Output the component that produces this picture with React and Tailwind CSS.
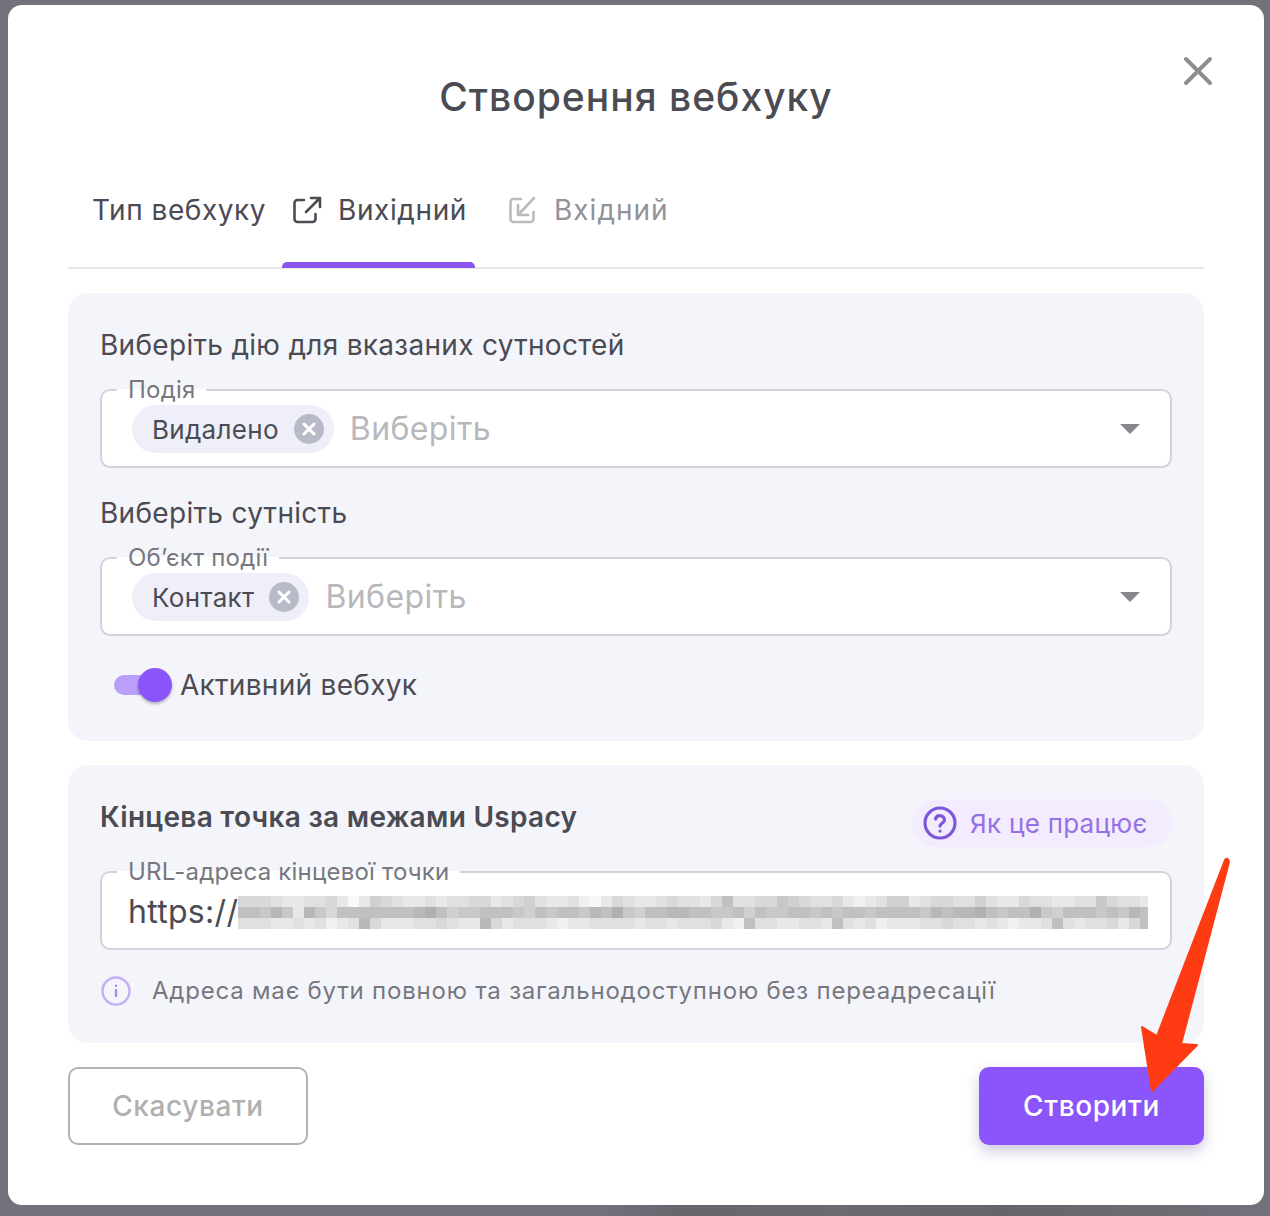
import React from 'react';

// blurred part of the url, gray level per cell (3 rows)
const blurRows = [
  'fffghhggfhjhefghhghggffhgfeghhgijhfghhgfgghfcggffdefggfhihgeehgffggeghhfgghhggdfgghfgghhgg',
  'ccdbdhbdfcccccccbaceddcccdecdccdbcadeccbbccddcecddccdcdccdccccdbcbbacdccadecccdcdbcbdcdcdc',
  'ggghhghgihgbfhhhggfghhbfhggghihhgggghgghgggfhicgghhgghcghgihhhggfgghghihhgcghggfhfcghghghg',
];
const shade = (c) => {
  const n = 176 + (c.charCodeAt(0) - 97) * 8;
  return `rgb(${n},${n},${n + 2})`;
};

const WebhookField = ({ label, children }) => (
  <fieldset className="h-[90px] min-w-0 rounded-[10px] border-2 border-[#d2d2d8] bg-white px-[30px] pb-[12px]">
    <legend className="ml-[-15px] px-[11px] text-[24px] leading-[24px] tracking-[0.2px] text-[#77777f]">{label}</legend>
    {children}
  </fieldset>
);

const Chip = ({ text }) => (
  <div className="flex h-[48px] items-center rounded-full bg-[#eeeff8] pl-[20px] pr-[10px]">
    <span className="text-[26px] tracking-[0.3px] text-[#4b4b55]">{text}</span>
    <span className="ml-[15px] flex h-[30px] w-[30px] items-center justify-center rounded-full bg-[#b9bac8]">
      <svg width="14" height="14" viewBox="0 0 14 14" fill="none" stroke="white" strokeWidth="3" strokeLinecap="round">
        <path d="M2 2l10 10M12 2L2 12" />
      </svg>
    </span>
  </div>
);

const SelectField = ({ label, chip }) => (
  <WebhookField label={label}>
    <div className="flex items-center pt-[3px]">
      <Chip text={chip} />
      <span className="ml-[16px] text-[32px] tracking-[0.4px] text-[#b8b8bc]">Виберіть</span>
      <svg className="ml-auto" width="20" height="10" viewBox="0 0 20 10" fill="#87878c">
        <path d="M0 0h20L10 10z" />
      </svg>
    </div>
  </WebhookField>
);

export default function App() {
  return (
    <div className="relative h-[1216px] w-[1270px] overflow-hidden bg-[#72727b] pl-[8px] pt-[5px] font-['Inter',sans-serif]">
      <div className="absolute bottom-0 left-[600px] right-0 h-[11px] bg-[linear-gradient(90deg,#72727b,#66666d_12%,#6a6a71_35%,#65656c_60%,#6c6c73_85%,#72727b)]" />
      <div className="relative h-[1200px] w-[1256px] rounded-[14px] bg-white px-[60px]">
        {/* Title */}
        <div className="flex h-[130px] items-end justify-center pb-[14px]">
          <h1 className="text-[39px] font-medium leading-[48px] tracking-[1px] text-[#4b4b53]">Створення вебхуку</h1>
        </div>
        <button className="absolute right-[51px] top-[51px] text-[#8e8e92]">
          <svg width="30" height="30" viewBox="0 0 30 30" fill="none" stroke="currentColor" strokeWidth="4" strokeLinecap="round">
            <path d="M3 3l24 24M27 3L3 27" />
          </svg>
        </button>

        {/* Tabs */}
        <div className="flex h-[134px] items-start border-b-2 border-[#e6e6ea] pt-[55px] text-[28px] leading-[40px] text-[#4b4b53]">
          <span className="ml-[24px] w-[190px] tracking-[0.55px]">Тип вебхуку</span>
          <div className="relative flex h-[78px] w-[193px] items-start pl-[10px] tracking-[0.6px]">
            <svg className="mt-[5px]" width="30" height="30" viewBox="0 0 30 30" fill="none" stroke="currentColor" strokeWidth="2.6" strokeLinecap="round" strokeLinejoin="round">
              <path d="M12 5H5.5A3 3 0 0 0 2.5 8v16a3 3 0 0 0 3 3h15a3 3 0 0 0 3-3v-5" />
              <path d="M14 17L28 3M19 3h9v9" />
            </svg>
            <span className="ml-[16px]">Вихідний</span>
            <div className="absolute bottom-0 left-0 right-0 h-[6px] rounded-t-[5px] bg-[#8b55f0]" />
          </div>
          <div className="ml-[33px] flex items-start tracking-[1px] opacity-60">
            <svg className="mt-[5px]" width="30" height="30" viewBox="0 0 30 30" fill="none" stroke="#8e8e92" strokeWidth="2.6" strokeLinecap="round" strokeLinejoin="round">
              <path d="M13 4H5.5a3 3 0 0 0-3 3v17a3 3 0 0 0 3 3h17a3 3 0 0 0 3-3v-7" />
              <path d="M26 3L11 19M10 10v10h10" />
            </svg>
            <span className="ml-[16px]">Вхідний</span>
          </div>
        </div>

        {/* Event panel */}
        <div className="mt-[24px] h-[448px] rounded-[20px] bg-[#f4f5fa] px-[32px] pt-[33px]">
          <p className="text-[28px] leading-[38px] tracking-[0.3px] text-[#4b4b53]">Виберіть дію для вказаних сутностей</p>
          <div className="mt-[14px]">
            <SelectField label="Подія" chip="Видалено" />
          </div>
          <p className="mt-[26px] text-[28px] leading-[38px] tracking-[0.3px] text-[#4b4b53]">Виберіть сутність</p>
          <div className="mt-[14px]">
            <SelectField label="Об’єкт події" chip="Контакт" />
          </div>
          <div className="ml-[14px] mt-[29px] flex items-center">
            <div className="relative h-[20px] w-[44px] rounded-full bg-[#b99ff8]">
              <div className="absolute right-[-14px] top-[-7px] h-[34px] w-[34px] rounded-full bg-[#8b55fb] shadow-[0_2px_3px_rgba(0,0,0,0.25)]" />
            </div>
            <span className="ml-[22px] text-[28px] leading-[40px] tracking-[0.3px] text-[#4b4b53]">Активний вебхук</span>
          </div>
        </div>

        {/* Endpoint panel */}
        <div className="mt-[24px] h-[278px] rounded-[20px] bg-[#f4f5fa] px-[32px] pt-[34px]">
          <div className="flex h-[48px] items-start justify-between">
            <p className="text-[28px] font-semibold leading-[36px] tracking-[0.3px] text-[#4b4b53]">Кінцева точка за межами Uspacy</p>
            <div className="flex h-[48px] w-[260px] items-center rounded-full bg-[#f3ecfe] pl-[11px]">
              <svg width="34" height="34" viewBox="0 0 34 34" fill="none" stroke="#7e57d9" strokeWidth="3.2" strokeLinecap="round" strokeLinejoin="round">
                <circle cx="17" cy="17" r="15" />
                <path d="M12.5 13a4.6 4.6 0 0 1 9 1c0 3-4.5 3.5-4.5 6" />
                <path d="M17 25v.1" />
              </svg>
              <span className="ml-[13px] text-[26px] tracking-[0.25px] text-[#9670e5]">Як це працює</span>
            </div>
          </div>
          <div className="mt-[13px]">
            <WebhookField label="URL-адреса кінцевої точки">
              <div className="ml-[-4px] flex h-[48px] items-center pt-[8px]">
                <span className="text-[32px] tracking-[0.3px] text-[#4b4b53]">https://</span>
                <div className="flex w-[910px] shrink-0 flex-col overflow-hidden">
                  {blurRows.map((row, i) => (
                    <div key={i} className="flex">
                      {row.split('').map((c, j) => (
                        <div key={j} className="h-[11px] w-[11px] shrink-0" style={{ backgroundColor: shade(c) }} />
                      ))}
                    </div>
                  ))}
                </div>
              </div>
            </WebhookField>
          </div>
          <div className="ml-[1px] mt-[25px] flex items-center">
            <svg width="30" height="30" viewBox="0 0 30 30" fill="none" stroke="#c4aef5" strokeWidth="2.4" strokeLinecap="round">
              <circle cx="15" cy="15" r="13.5" />
              <path d="M15 14v6M15 9.6v.1" stroke="#a78bea" />
            </svg>
            <span className="ml-[21px] text-[24px] leading-[32px] tracking-[0.8px] text-[#77777f]">Адреса має бути повною та загальнодоступною без переадресації</span>
          </div>
        </div>

        {/* Buttons */}
        <div className="mt-[24px] flex justify-between">
          <button className="h-[78px] w-[240px] rounded-[10px] border-2 border-[#b3b3b5] text-[28px] font-medium tracking-[0.6px] text-[#b0b0b2]">Скасувати</button>
          <button className="h-[78px] w-[225px] rounded-[10px] bg-[#8b55fb] text-[28px] font-medium tracking-[0.6px] text-white shadow-[0_6px_14px_rgba(60,40,120,0.25)]">Створити</button>
        </div>
      </div>

      {/* Red annotation arrow over the button */}
      <svg className="absolute left-0 top-0" width="1270" height="1216" viewBox="0 0 1270 1216" fill="#ff3b14" stroke="#ff3b14" strokeWidth="2" strokeLinejoin="round">
        <path d="M1225 860Q1228 857 1229 862L1181 1044L1197 1045L1152 1091L1142 1027L1157 1036Z" />
      </svg>
    </div>
  );
}
